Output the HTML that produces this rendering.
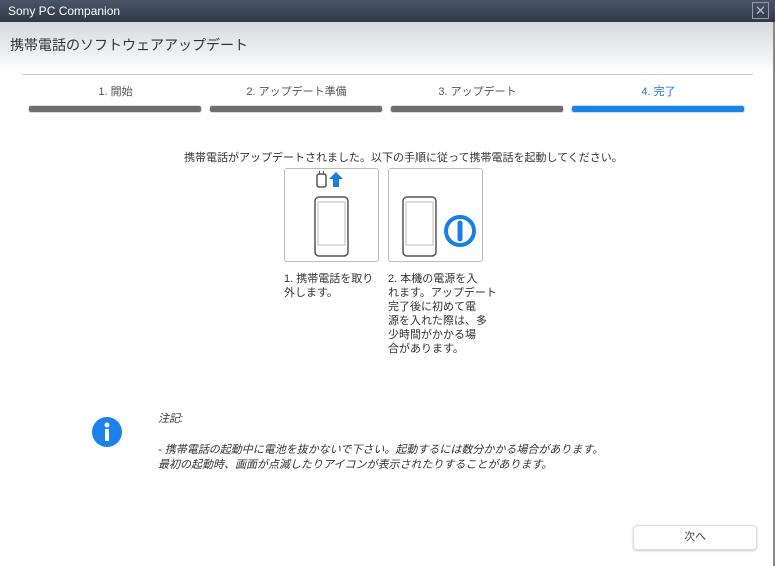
<!DOCTYPE html>
<html><head><meta charset="utf-8"><style>
*{margin:0;padding:0;box-sizing:border-box}
body{width:775px;height:566px;overflow:hidden;background:#fff;font-family:"Liberation Sans","Noto Sans CJK JP",sans-serif;position:relative}
.tb{position:absolute;left:0;top:0;width:775px;height:22px;background:linear-gradient(#4a5568,#2f3848);color:#fff;font-size:12px;padding:4px 0 0 8px}
.x{position:absolute;right:6px;top:2px;width:17px;height:17px;border:1px solid #99a;color:#bbc;font-size:13px;line-height:15px;text-align:center}
.hd{position:absolute;left:0;top:22px;width:775px;height:52px;background:linear-gradient(#d6d9dd,#fff)}
.hd span{position:absolute;left:10px;top:13px;font-size:14px;color:#333}
.ln{position:absolute;left:22px;top:74px;width:731px;height:1px;background:#ccc}
.st{position:absolute;top:83px;font-size:11px;color:#555;text-align:center;width:173px}
.bar{position:absolute;top:105px;width:174px;height:8px;border-radius:3px;background:#6e6e6e;border:1px solid #ddd}
.rb{position:absolute;right:0;top:22px;width:2px;height:544px;background:#888}
.box{position:absolute;top:168px;width:95px;height:94px;border:1px solid #bbb;border-radius:3px}
.cap{position:absolute;top:272px;font-size:11px;color:#333;line-height:14px;white-space:nowrap}
.note{position:absolute;font-size:11px;color:#333;font-style:italic}
</style></head><body>
<div class="tb">Sony PC Companion<div class="x">✕</div></div>
<div class="hd"><span>携帯電話のソフトウェアアップデート</span></div>
<div class="ln"></div>
<div class="st" style="left:29px">1. 開始</div>
<div class="st" style="left:210px">2. アップデート準備</div>
<div class="st" style="left:391px">3. アップデート</div>
<div class="st" style="left:572px;color:#1a7ad4">4. 完了</div>
<div class="bar" style="left:28px"></div>
<div class="bar" style="left:209px"></div>
<div class="bar" style="left:390px"></div>
<div class="bar" style="left:571px;background:#1a82e8;border-color:#bfe0ff"></div>
<div style="position:absolute;left:184px;top:149px;font-size:11px;color:#333">携帯電話がアップデートされました。以下の手順に従って携帯電話を起動してください。</div>
<div class="box" style="left:284px">
<svg width="95" height="94">
<rect x="32" y="5" width="9" height="13" rx="2" fill="none" stroke="#555" stroke-width="1.5"/><line x1="34.5" y1="2" x2="34.5" y2="5" stroke="#555"/><line x1="38.5" y1="2" x2="38.5" y2="5" stroke="#555"/>
<path d="M44 10 L51 3 L58 10 L54 10 L54 18 L48 18 L48 10Z" fill="#1a7ee0"/>
<rect x="30" y="28" width="33" height="59" rx="4" fill="none" stroke="#555" stroke-width="1.5"/><rect x="33" y="33" width="27" height="43" fill="none" stroke="#bbb"/>
</svg></div>
<div class="box" style="left:388px">
<svg width="95" height="94">
<rect x="14" y="28" width="33" height="59" rx="4" fill="none" stroke="#555" stroke-width="1.5"/><rect x="17" y="33" width="27" height="43" fill="none" stroke="#bbb"/>
<circle cx="71" cy="62" r="14" fill="none" stroke="#1a7ee0" stroke-width="4"/><line x1="71" y1="54" x2="71" y2="70" stroke="#1a7ee0" stroke-width="5" stroke-linecap="round"/>
</svg></div>
<div class="cap" style="left:284px">1. 携帯電話を取り<br>外します。</div>
<div class="cap" style="left:388px">2. 本機の電源を入<br>れます。アップデート<br>完了後に初めて電<br>源を入れた際は、多<br>少時間がかかる場<br>合があります。</div>
<svg style="position:absolute;left:91px;top:416px" width="32" height="32"><circle cx="16" cy="16" r="15" fill="#1a82e8"/><circle cx="16" cy="9" r="2.5" fill="#fff"/><rect x="14" y="13" width="4" height="12" fill="#fff"/></svg>
<div class="note" style="left:158px;top:410px">注記:</div>
<div class="note" style="left:158px;top:441px">- 携帯電話の起動中に電池を抜かないで下さい。起動するには数分かかる場合があります。</div>
<div class="note" style="left:158px;top:456px">最初の起動時、画面が点滅したりアイコンが表示されたりすることがあります。</div>
<div style="position:absolute;left:633px;top:525px;width:124px;height:25px;border:1px solid #ddd;border-radius:4px;box-shadow:0 1px 2px #ccc;font-size:11px;color:#444;text-align:center;line-height:23px">次へ</div>
<div class="rb"></div>
</body></html>
